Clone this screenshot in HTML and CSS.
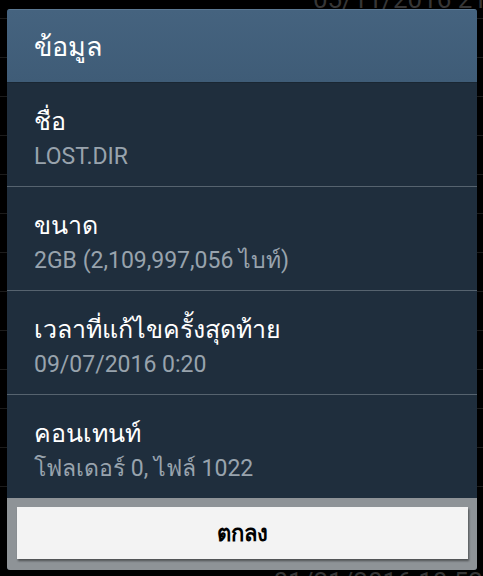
FILE: index.html
```html
<!DOCTYPE html>
<html lang="th">
<head>
	<meta charset="UTF-8">
	<title>ข้อมูล</title>
	<link rel="stylesheet" href="styles.css">
</head>
<body>
	<div id="backdrop">
		<div class="file top"><span class="date">05/11/2016 21:45</span></div>
		<div class="file"></div>
		<div class="file"></div>
		<div class="file"></div>
		<div class="file"></div>
		<div class="file"></div>
		<div class="file"></div>
		<div class="file"></div>
		<div class="file"></div>
		<div class="file"></div>
		<div class="file"></div>
		<div class="file"></div>
		<div class="file"></div>
		<div class="file last"><span class="count">11 รายการ</span><span class="date">01/21/2016 10:52</span></div>
	</div>

	<div id="dialog">
		<div class="title">ข้อมูล</div>
		<ul class="info">
			<li>
				<div class="label">ชื่อ</div>
				<div class="value">LOST.DIR</div>
			</li>
			<li>
				<div class="label">ขนาด</div>
				<div class="value">2GB (2,109,997,056 ไบท์)</div>
			</li>
			<li>
				<div class="label">เวลาที่แก้ไขครั้งสุดท้าย</div>
				<div class="value">09/07/2016 0:20</div>
			</li>
			<li>
				<div class="label">คอนเทนท์</div>
				<div class="value">โฟลเดอร์ 0, ไฟล์ 1022</div>
			</li>
		</ul>
		<div class="buttons">
			<button class="ok">ตกลง</button>
		</div>
	</div>
</body>
</html>
```

FILE: styles.css
```css
*{
	margin: 0;
	padding: 0;
	box-sizing: border-box;
}
ul, ol{
	list-style: none;
}
html, body{
	width: 483px;
	height: 576px;
	overflow: hidden;
}
body{
	background: #000;
	font-family: Roboto, "Noto Sans", "DejaVu Sans", sans-serif;
	position: relative;
}

/* list behind the dialog */
#backdrop{
	display: flex;
	flex-direction: column;
	margin-top: -20px;
}
#backdrop .file{
	height: 39px;
	border-bottom: 1px solid #1c1c1c;
	display: flex;
	align-items: flex-end;
	padding-bottom: 4px;
	color: #363636;
	font-size: 26px;
	flex-shrink: 0;
	white-space: nowrap;
}
#backdrop .date{
	margin-left: 313px;
}
#backdrop .last{
	height: auto;
	align-items: flex-start;
	padding-top: 80px;
	border-bottom: none;
}
#backdrop .last .count{
	width: 193px;
	margin-left: 120px;
}
#backdrop .last .date{
	margin-left: 0;
}

/* dialog */
#dialog{
	position: absolute;
	left: 7px;
	top: 9px;
	width: 470px;
	height: 561px;
	border-radius: 3px;
	overflow: hidden;
	display: flex;
	flex-direction: column;
	background: #1f2e3d;
}
#dialog .title{
	height: 74px;
	flex-shrink: 0;
	background: linear-gradient(#45637f, #3f5c77);
	border-top: 1px solid #5b7892;
	border-bottom: 1px solid #1a2733;
	color: #fff;
	font-size: 27px;
	padding-left: 27px;
	line-height: 74px;
}
#dialog .info li{
	height: 104px;
	border-bottom: 1px solid #56636f;
	padding: 22px 0 0 27px;
}
#dialog .info li:last-child{
	height: 103px;
	border-bottom: none;
}
#dialog .label{
	color: #fff;
	font-size: 25px;
	line-height: 34px;
}
#dialog .value{
	color: #98a3ad;
	font-size: 23px;
	line-height: 35px;
}
#dialog .buttons{
	flex: 1;
	background: #8e9397;
	padding: 9px 9px 0 10px;
}
#dialog .ok{
	display: block;
	width: 451px;
	height: 52px;
	border: none;
	background: #f3f3f3;
	box-shadow: 1px 2px 2px rgba(0, 0, 0, 0.45);
	color: #000;
	font-family: Roboto, "Noto Sans", "DejaVu Sans", sans-serif;
	font-size: 22px;
	font-weight: bold;
}
```
